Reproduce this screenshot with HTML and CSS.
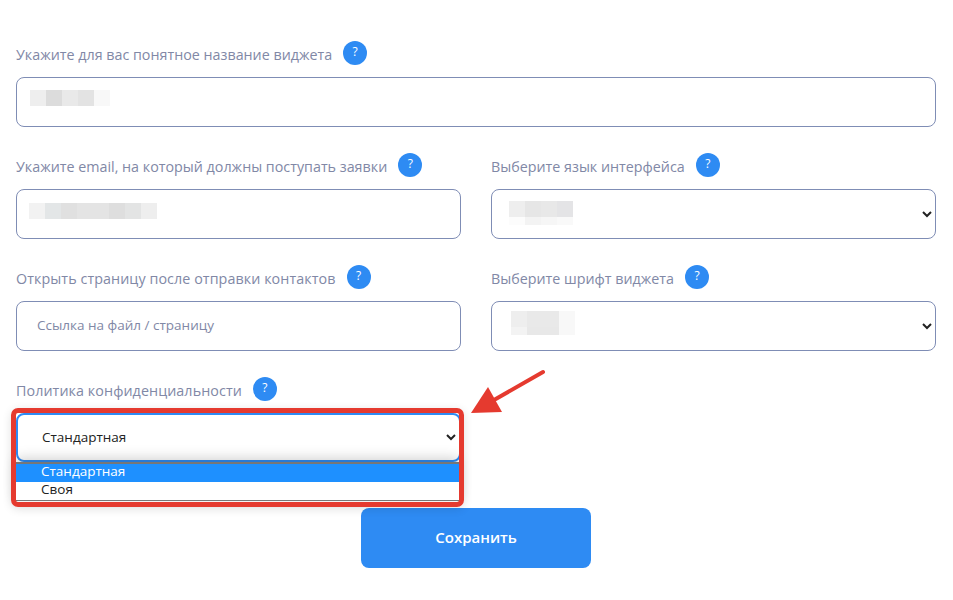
FILE: index.html
```html
<!DOCTYPE html>
<html lang="ru">
<head>
  <meta charset="UTF-8" />
  <meta name="viewport" content="width=device-width, initial-scale=1.0" />
  <title>Настройки виджета</title>
  <link rel="stylesheet" href="styles.css">
</head>
<body>
  <form class="settings">
    <div class="field wide">
      <div class="label"><span>Укажите для вас понятное название виджета</span><i class="help">?</i></div>
      <div class="control">
        <input type="text" />
        <div class="blur blur-name"></div>
      </div>
    </div>

    <div class="field">
      <div class="label"><span>Укажите email, на который должны поступать заявки</span><i class="help">?</i></div>
      <div class="control">
        <input type="text" />
        <div class="blur blur-email"></div>
      </div>
    </div>

    <div class="field">
      <div class="label"><span>Выберите язык интерфейса</span><i class="help">?</i></div>
      <div class="control">
        <select><option></option></select>
        <div class="blur blur-lang"></div>
      </div>
    </div>

    <div class="field">
      <div class="label loose"><span>Открыть страницу после отправки контактов</span><i class="help">?</i></div>
      <div class="control">
        <input type="text" placeholder="Ссылка на файл / страницу" />
      </div>
    </div>

    <div class="field">
      <div class="label"><span>Выберите шрифт виджета</span><i class="help">?</i></div>
      <div class="control">
        <select><option></option></select>
        <div class="blur blur-font"></div>
      </div>
    </div>

    <div class="field">
      <div class="label loose"><span>Политика конфиденциальности</span><i class="help">?</i></div>
      <div class="control">
        <select class="open"><option>Стандартная</option><option>Своя</option></select>
        <!-- opened dropdown -->
        <ul class="dropdown">
          <li class="active">Стандартная</li>
          <li>Своя</li>
        </ul>
        <div class="marker"></div>
        <svg class="arrow" width="80" height="50" viewBox="0 0 80 50">
          <path d="M73 3 L24 31" fill="none" stroke="#e53a2f" stroke-width="4" stroke-linecap="round" />
          <path d="M1 44 L18 18 L32 43 Z" fill="#e53a2f" />
        </svg>
      </div>
    </div>

    <div class="actions">
      <button type="button" class="save">Сохранить</button>
    </div>
  </form>
</body>
</html>
```

FILE: styles.css
```css
* {
  box-sizing: border-box;
}

body {
  margin: 0;
  background: #fff;
  font-family: "Open Sans", "Noto Sans", sans-serif;
  font-size: 14.3px;
}

/* ----------- LAYOUT ----------- */
.settings {
  display: grid;
  grid-template-columns: 445px 445px;
  column-gap: 30px;
  row-gap: 26px;
  padding: 41px 17px 32px 16px;
}

.wide,
.actions {
  grid-column: 1 / -1;
}

/* --- LABELS --- */
.label {
  display: flex;
  align-items: center;
  gap: 11px;
  height: 24px;
  margin-bottom: 12px;
  color: #8188a6;
}

.label span {
  padding-top: 3px;
}

.loose span {
  letter-spacing: 0.08px;
}

.help {
  flex: none;
  width: 24px;
  height: 24px;
  border-radius: 50%;
  background: #2e8bf3;
  color: #fff;
  font-style: normal;
  font-size: 12px;
  line-height: 22px;
  text-align: center;
}

/* --- CONTROLS --- */
.control {
  position: relative;
}

input,
select {
  display: block;
  width: 100%;
  height: 50px;
  padding: 0 20px 2px;
  border: 1px solid #7f8db5;
  border-radius: 8px;
  background: #fff;
  font-family: inherit;
  font-size: 13.5px;
  color: #222;
  outline: none;
}

input::placeholder {
  color: #8188a6;
  opacity: 1;
}

select.open {
  height: 49px;
  border: 2px solid #2e8bf3;
}

/* pixelated values */
.blur {
  position: absolute;
  height: 16px;
}

.blur-name {
  left: 14px;
  top: 13px;
  width: 80px;
  background: linear-gradient(90deg, #eee 20%, #dcdcdc 20% 40%, #e9e9e9 40% 60%, #e3e3e3 60% 80%, #f8f8f8 80%);
}

.blur-email {
  left: 13px;
  top: 14px;
  width: 128px;
  background: linear-gradient(90deg, #f2f2f2 12.5%, #e3e6e7 12.5% 25%, #e0e0e0 25% 37.5%, #e4e4e4 37.5% 62.5%, #dedede 62.5% 75%, #e3e4e4 75% 87.5%, #eee 87.5%);
}

.blur-lang {
  left: 18px;
  top: 12px;
  width: 64px;
  height: 24px;
  background:
    linear-gradient(90deg, #fcfcfc 25%, #f3f3f3 25% 50%, #f6f6f6 50% 75%, #f9f9f9 75%) bottom / 100% 8px no-repeat,
    linear-gradient(90deg, #eee 25%, #e6e6e6 25% 50%, #e8e8e8 50% 75%, #e4e4e6 75%) top / 100% 16px no-repeat;
}

.blur-font {
  left: 20px;
  top: 10px;
  width: 64px;
  height: 24px;
  background:
    linear-gradient(90deg, #f3f3f3 25%, #e8e8e8 25% 75%, #f8f8f8 75%) bottom / 100% 8px no-repeat,
    linear-gradient(90deg, #eee 25%, #e9e9e9 25% 75%, #f8f8f8 75%) top / 100% 16px no-repeat;
}

/* --- OPEN DROPDOWN --- */
.dropdown {
  position: absolute;
  top: 49px;
  left: 0;
  width: 443px;
  margin: 0;
  padding: 2px 0 0;
  list-style: none;
  background: #fff;
  border-bottom: 1px solid #777;
  box-shadow: 0 -4px 12px rgba(0, 0, 0, 0.18);
  font-size: 13.5px;
  line-height: 15px;
  color: #222;
}

.dropdown::before {
  content: "";
  position: absolute;
  top: 0;
  left: 0;
  right: 0;
  height: 2px;
  background: #777;
}

.dropdown li {
  height: 18px;
  padding-left: 25px;
}

.dropdown .active {
  background: #1e90ff;
  color: #fff;
}

/* annotation over the screenshot */
.marker {
  position: absolute;
  top: -5px;
  left: -5px;
  width: 453px;
  height: 99px;
  border: 5px solid #e53a2f;
  border-radius: 7px;
  box-shadow: 0 2px 10px rgba(0, 0, 0, 0.12);
}

.arrow {
  position: absolute;
  top: -44px;
  left: 454px;
}

/* --- SAVE BUTTON --- */
.actions {
  display: flex;
  justify-content: center;
  margin-top: 20px;
}

.save {
  width: 230px;
  height: 60px;
  padding: 0 0 2px;
  border: 0;
  border-radius: 8px;
  background: #2e8bf3;
  color: #fff;
  font-family: inherit;
  font-size: 15px;
  font-weight: 600;
}
```
